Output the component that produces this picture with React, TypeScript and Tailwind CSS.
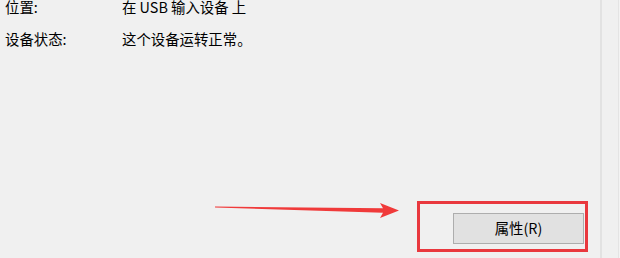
import React from "react";

export default function App() {
  const font = { fontFamily: '"Noto Sans CJK SC", "Microsoft YaHei", sans-serif' };
  return (
    <div className="w-[620px] h-[258px] bg-[#f0f0f0] flex overflow-hidden text-black" style={font}>
      <div className="relative w-[600px] h-full flex flex-col">
        <div className="flex flex-col gap-[11px] pl-[5px] -mt-[4px] text-[14.4px] leading-[21px]">
          <div className="flex">
            <span className="w-[117px]">位置:</span>
            <span>在 USB 输入设备 上</span>
          </div>
          <div className="flex">
            <span className="w-[117px]">设备状态:</span>
            <span>这个设备运转正常。</span>
          </div>
        </div>
        <div className="flex-1" />
        <div className="flex justify-end pr-[12px] pb-[6px]">
          <div className="border-[3px] border-[#e9383e] pl-[33px] pt-[9px] pr-[1px] pb-[5px]">
            <button className="w-[131px] h-[31px] bg-[#e1e1e1] border border-[#adadad] text-[14.4px] leading-none text-black" style={font}>
              属性(R)
            </button>
          </div>
        </div>
        <svg className="absolute left-[213px] top-[200px]" width="190" height="20" viewBox="0 0 190 20">
          <polygon points="2,6.5 170,8.3 167,3 186,10.5 167,18 170,12.7 2,7.6" fill="#f03a3a" />
        </svg>
      </div>
      <div className="w-[2px] h-full bg-[#e2e2e2]" />
      <div className="w-[16px] h-full bg-[#f0f0f0]" />
      <div className="w-[1px] h-full bg-[#e4e4e4]" />
      <div className="flex-1 h-full bg-[#f3f3f3]" />
    </div>
  );
}
